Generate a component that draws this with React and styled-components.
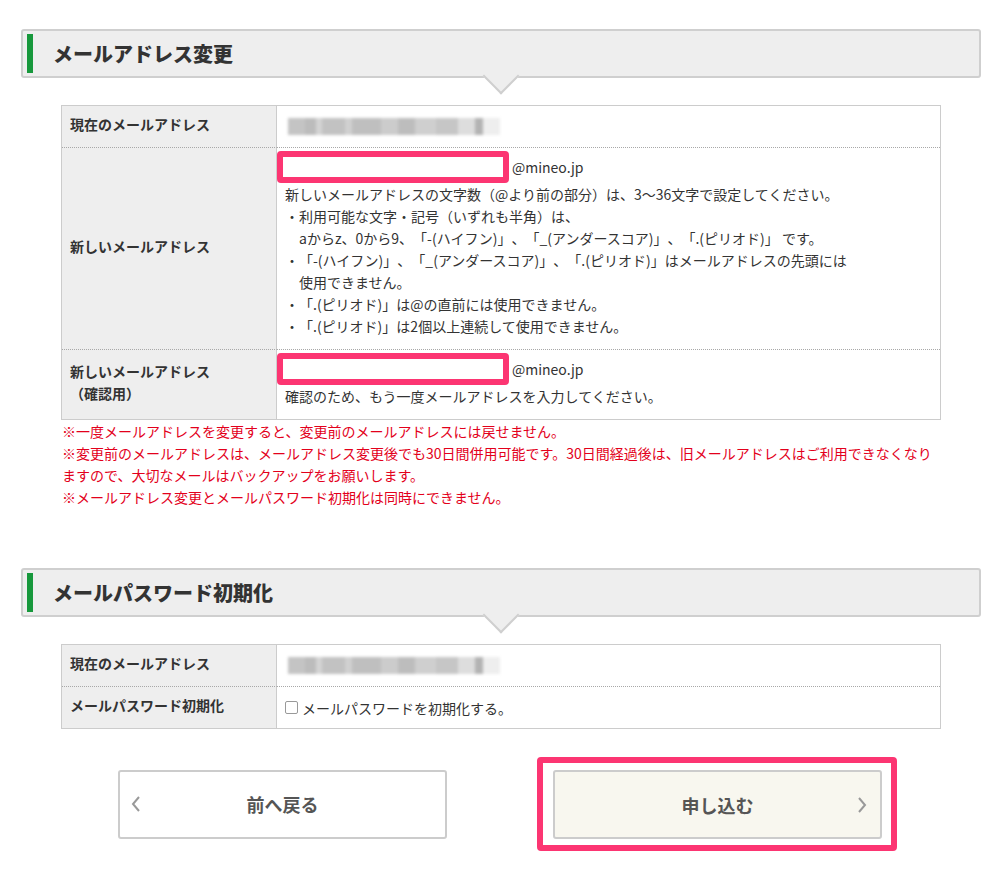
import styled, { createGlobalStyle } from "styled-components";

const GlobalStyle = createGlobalStyle`
  body {
    margin: 0;
    background: #fff;
    color: #333;
    font-family: "Noto Sans CJK JP", "Noto Sans", sans-serif;
    text-spacing-trim: space-all;
  }
`;

const Page = styled.div`
  width: 960px;
  padding: 29px 20px 20px 21px;
`;

const SectionHeader = styled.div`
  position: relative;
  display: flex;
  align-items: center;
  height: 45px;
  margin-top: ${(p) => p.$top || 0}px;
  background: #eeeeee;
  border: 2px solid #cfcfcf;
  border-radius: 3px;

  &::after {
    content: "";
    position: absolute;
    left: 50%;
    bottom: -13px;
    width: 24px;
    height: 24px;
    background: #eeeeee;
    border-right: 2px solid #cfcfcf;
    border-bottom: 2px solid #cfcfcf;
    transform: translateX(-50%) rotate(45deg);
  }
`;

const Accent = styled.span`
  width: 6px;
  height: 39px;
  margin-left: 4px;
  background: #17983c;
`;

const Title = styled.h2`
  margin: 0 0 0 20px;
  font-size: 20px;
  font-weight: 900;
  color: #333;
`;

const FormTable = styled.table`
  width: 880px;
  margin: 27px 40px 0;
  border: 1px solid #cccccc;
  border-spacing: 0;
  font-size: 14px;
  line-height: 22px;

  tr + tr th,
  tr + tr td {
    border-top: 1px dotted #a8a8a8;
  }
`;

const Label = styled.th`
  width: 199px;
  padding: 0 7px 6px 8px;
  background: #eeeeee;
  border-right: 1px solid #cccccc;
  text-align: left;
  font-weight: bold;
  font-size: 14px;
  color: #333;
`;

const Cell = styled.td`
  padding: ${(p) => (p.$form ? "3px 8px 12px" : "9.5px 8px")};
  vertical-align: top;
  color: #333;
`;

const Blurred = styled.div`
  width: 212px;
  height: 17px;
  margin-left: 3px;
  filter: blur(1.5px);
  background: linear-gradient(
    to right,
    #c4c4c4 0 8%,
    #bcbcbc 8% 13%,
    #d4d4d4 13% 16%,
    #c2c2c2 16% 27%,
    #d0d0d0 27% 30%,
    #bfbfbf 30% 44%,
    #cccccc 44% 52%,
    #bdbdbd 52% 60%,
    #cfcfcf 60% 70%,
    #c6c6c6 70% 80%,
    #dddddd 80% 88%,
    #b3b3b3 88% 92%,
    #eeeeee 92% 100%
  );
`;

const InputRow = styled.div`
  display: flex;
  align-items: center;
  gap: 3px;
  height: ${(p) => (p.$plain ? 22 : 32)}px;
  margin-left: ${(p) => (p.$plain ? 0 : -8)}px;
`;

const MailInput = styled.input`
  box-sizing: border-box;
  width: 232px;
  height: 32px;
  border: 6px solid #fc3572;
  border-radius: 4px;
  background: #fff;
  outline: none;
`;

const Rules = styled.ul`
  margin: 0;
  padding: 0;
  list-style: none;
`;

const Rule = styled.li`
  padding-left: ${(p) => (p.$bullet ? 14 : 0)}px;
  text-indent: ${(p) => (p.$bullet ? -14 : 0)}px;
`;

const Notes = styled.div`
  margin: 0 40px;
  padding-left: 1px;
  color: #e3001b;
  font-size: 14px;
  line-height: 22px;
`;

const CheckLabel = styled.label`
  display: flex;
  align-items: center;
  gap: 4px;
`;

const Check = styled.input`
  appearance: none;
  width: 13px;
  height: 13px;
  margin: 0;
  border: 1px solid #999;
  border-radius: 2px;
  background: #fff;
`;

const ButtonRow = styled.div`
  display: flex;
  align-items: center;
  gap: 90px;
  margin-top: 28px;
  padding-left: 97px;
`;

const Highlight = styled.div`
  padding: 7px 9px 6px 10px;
  border: 6px solid #fc3572;
  border-radius: 4px;
`;

const Button = styled.button`
  display: grid;
  grid-template-columns: 40px 1fr 40px;
  align-items: center;
  width: 329px;
  height: 69px;
  padding: 0;
  border: 2px solid #cccccc;
  border-radius: 3px;
  background: ${(p) => (p.$primary ? "#f8f7ef" : "#ffffff")};
  color: #555;
  font-family: inherit;
  font-size: 18px;
  font-weight: bold;
  cursor: pointer;

  span {
    grid-column: 2;
    grid-row: 1;
  }
`;

const Chevron = ({ dir }) => (
  <svg
    width="40"
    height="16"
    viewBox="0 0 40 16"
    style={{ gridColumn: dir === "left" ? 1 : 3, gridRow: 1 }}
  >
    <polyline
      points={dir === "left" ? "19,1 13,8 19,15" : "19,1 25,8 19,15"}
      fill="none"
      stroke="#999"
      strokeWidth="2"
    />
  </svg>
);

const App = () => {
  return (
    <Page>
      <GlobalStyle />

      <SectionHeader>
        <Accent />
        <Title>メールアドレス変更</Title>
      </SectionHeader>

      <FormTable>
        <tbody>
          <tr>
            <Label>現在のメールアドレス</Label>
            <Cell>
              <InputRow $plain>
                <Blurred />
              </InputRow>
            </Cell>
          </tr>
          <tr>
            <Label>新しいメールアドレス</Label>
            <Cell $form>
              <InputRow>
                <MailInput type="text" />
                @mineo.jp
              </InputRow>
              <Rules>
                <Rule>
                  新しいメールアドレスの文字数（@より前の部分）は、3〜36文字で設定してください。
                </Rule>
                <Rule $bullet>
                  ・利用可能な文字・記号（いずれも半角）は、
                  <br />
                  aからz、0から9、「-(ハイフン)」、「_(アンダースコア)」、「.(ピリオド)」 です。
                </Rule>
                <Rule $bullet>
                  ・「-(ハイフン)」、「_(アンダースコア)」、「.(ピリオド)」はメールアドレスの先頭には
                  <br />
                  使用できません。
                </Rule>
                <Rule $bullet>・「.(ピリオド)」は@の直前には使用できません。</Rule>
                <Rule $bullet>・「.(ピリオド)」は2個以上連続して使用できません。</Rule>
              </Rules>
            </Cell>
          </tr>
          <tr>
            <Label>
              新しいメールアドレス
              <br />
              （確認用）
            </Label>
            <Cell $form>
              <InputRow>
                <MailInput type="text" />
                @mineo.jp
              </InputRow>
              確認のため、もう一度メールアドレスを入力してください。
            </Cell>
          </tr>
        </tbody>
      </FormTable>

      <Notes>
        ※一度メールアドレスを変更すると、変更前のメールアドレスには戻せません。
        <br />
        ※変更前のメールアドレスは、メールアドレス変更後でも30日間併用可能です。30日間経過後は、旧メールアドレスはご利用できなくなり
        <br />
        ますので、大切なメールはバックアップをお願いします。
        <br />
        ※メールアドレス変更とメールパスワード初期化は同時にできません。
      </Notes>

      <SectionHeader $top={60}>
        <Accent />
        <Title>メールパスワード初期化</Title>
      </SectionHeader>

      <FormTable>
        <tbody>
          <tr>
            <Label>現在のメールアドレス</Label>
            <Cell>
              <InputRow $plain>
                <Blurred />
              </InputRow>
            </Cell>
          </tr>
          <tr>
            <Label>メールパスワード初期化</Label>
            <Cell>
              <CheckLabel>
                <Check type="checkbox" />
                メールパスワードを初期化する。
              </CheckLabel>
            </Cell>
          </tr>
        </tbody>
      </FormTable>

      <ButtonRow>
        <Button>
          <Chevron dir="left" />
          <span>前へ戻る</span>
        </Button>
        <Highlight>
          <Button $primary>
            <span>申し込む</span>
            <Chevron dir="right" />
          </Button>
        </Highlight>
      </ButtonRow>
    </Page>
  );
};

export default App;
